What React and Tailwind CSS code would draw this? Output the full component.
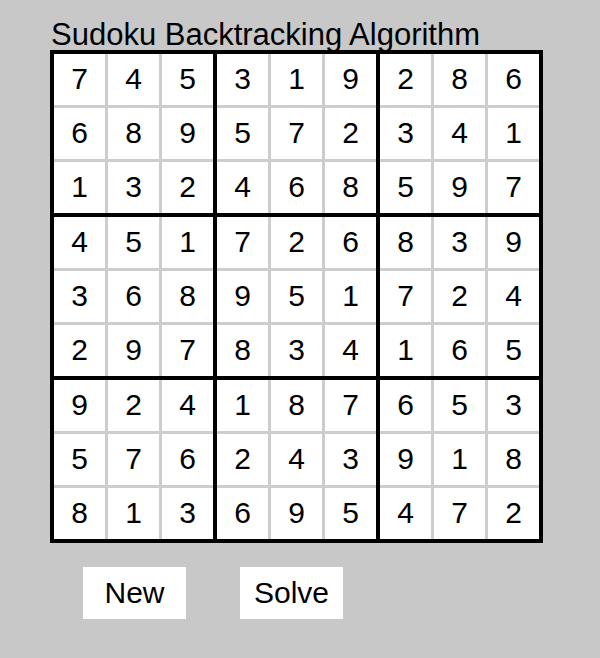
import React, { useState } from "react";

const SOLVED = [
  [7, 4, 5, 3, 1, 9, 2, 8, 6],
  [6, 8, 9, 5, 7, 2, 3, 4, 1],
  [1, 3, 2, 4, 6, 8, 5, 9, 7],
  [4, 5, 1, 7, 2, 6, 8, 3, 9],
  [3, 6, 8, 9, 5, 1, 7, 2, 4],
  [2, 9, 7, 8, 3, 4, 1, 6, 5],
  [9, 2, 4, 1, 8, 7, 6, 5, 3],
  [5, 7, 6, 2, 4, 3, 9, 1, 8],
  [8, 1, 3, 6, 9, 5, 4, 7, 2],
];

// cells of one 3x3 block, read row by row
const blockCells = (board, b) => {
  const r0 = Math.floor(b / 3) * 3;
  const c0 = (b % 3) * 3;
  const out = [];
  for (let r = r0; r < r0 + 3; r++) {
    for (let c = c0; c < c0 + 3; c++) out.push(board[r][c]);
  }
  return out;
};

const Block = ({ cells }) => (
  <div className="grid grid-cols-3 gap-[3px] bg-[#cdcdcd]">
    {cells.map((v, i) => (
      <div
        key={i}
        className="w-[51px] h-[51px] bg-white flex items-center justify-center pb-[2px] text-[30px] leading-none text-black"
      >
        {v || ""}
      </div>
    ))}
  </div>
);

export default function App() {
  const [board, setBoard] = useState(SOLVED);

  return (
    <div
      className="w-[600px] h-[658px] bg-[#c8c8c8] pl-[50px] pt-[18px]"
      style={{ fontFamily: '"Liberation Sans", Arial, sans-serif' }}
    >
      <h1 className="h-[32px] leading-[34px] text-[31px] text-black font-normal whitespace-nowrap pl-px">
        Sudoku Backtracking Algorithm
      </h1>

      {/* board */}
      <div className="w-fit grid grid-cols-3 gap-[4px] p-[4px] bg-black">
        {[0, 1, 2, 3, 4, 5, 6, 7, 8].map((b) => (
          <Block key={b} cells={blockCells(board, b)} />
        ))}
      </div>

      <div className="flex gap-[54px] pl-[33px] mt-[24px]">
        <button
          onClick={() => setBoard(SOLVED.map((row) => row.map(() => 0)))}
          className="w-[103px] h-[52px] bg-white text-[30px] text-black leading-none"
        >
          New
        </button>
        <button
          onClick={() => setBoard(SOLVED)}
          className="w-[103px] h-[52px] bg-white text-[30px] text-black leading-none"
        >
          Solve
        </button>
      </div>
    </div>
  );
}
